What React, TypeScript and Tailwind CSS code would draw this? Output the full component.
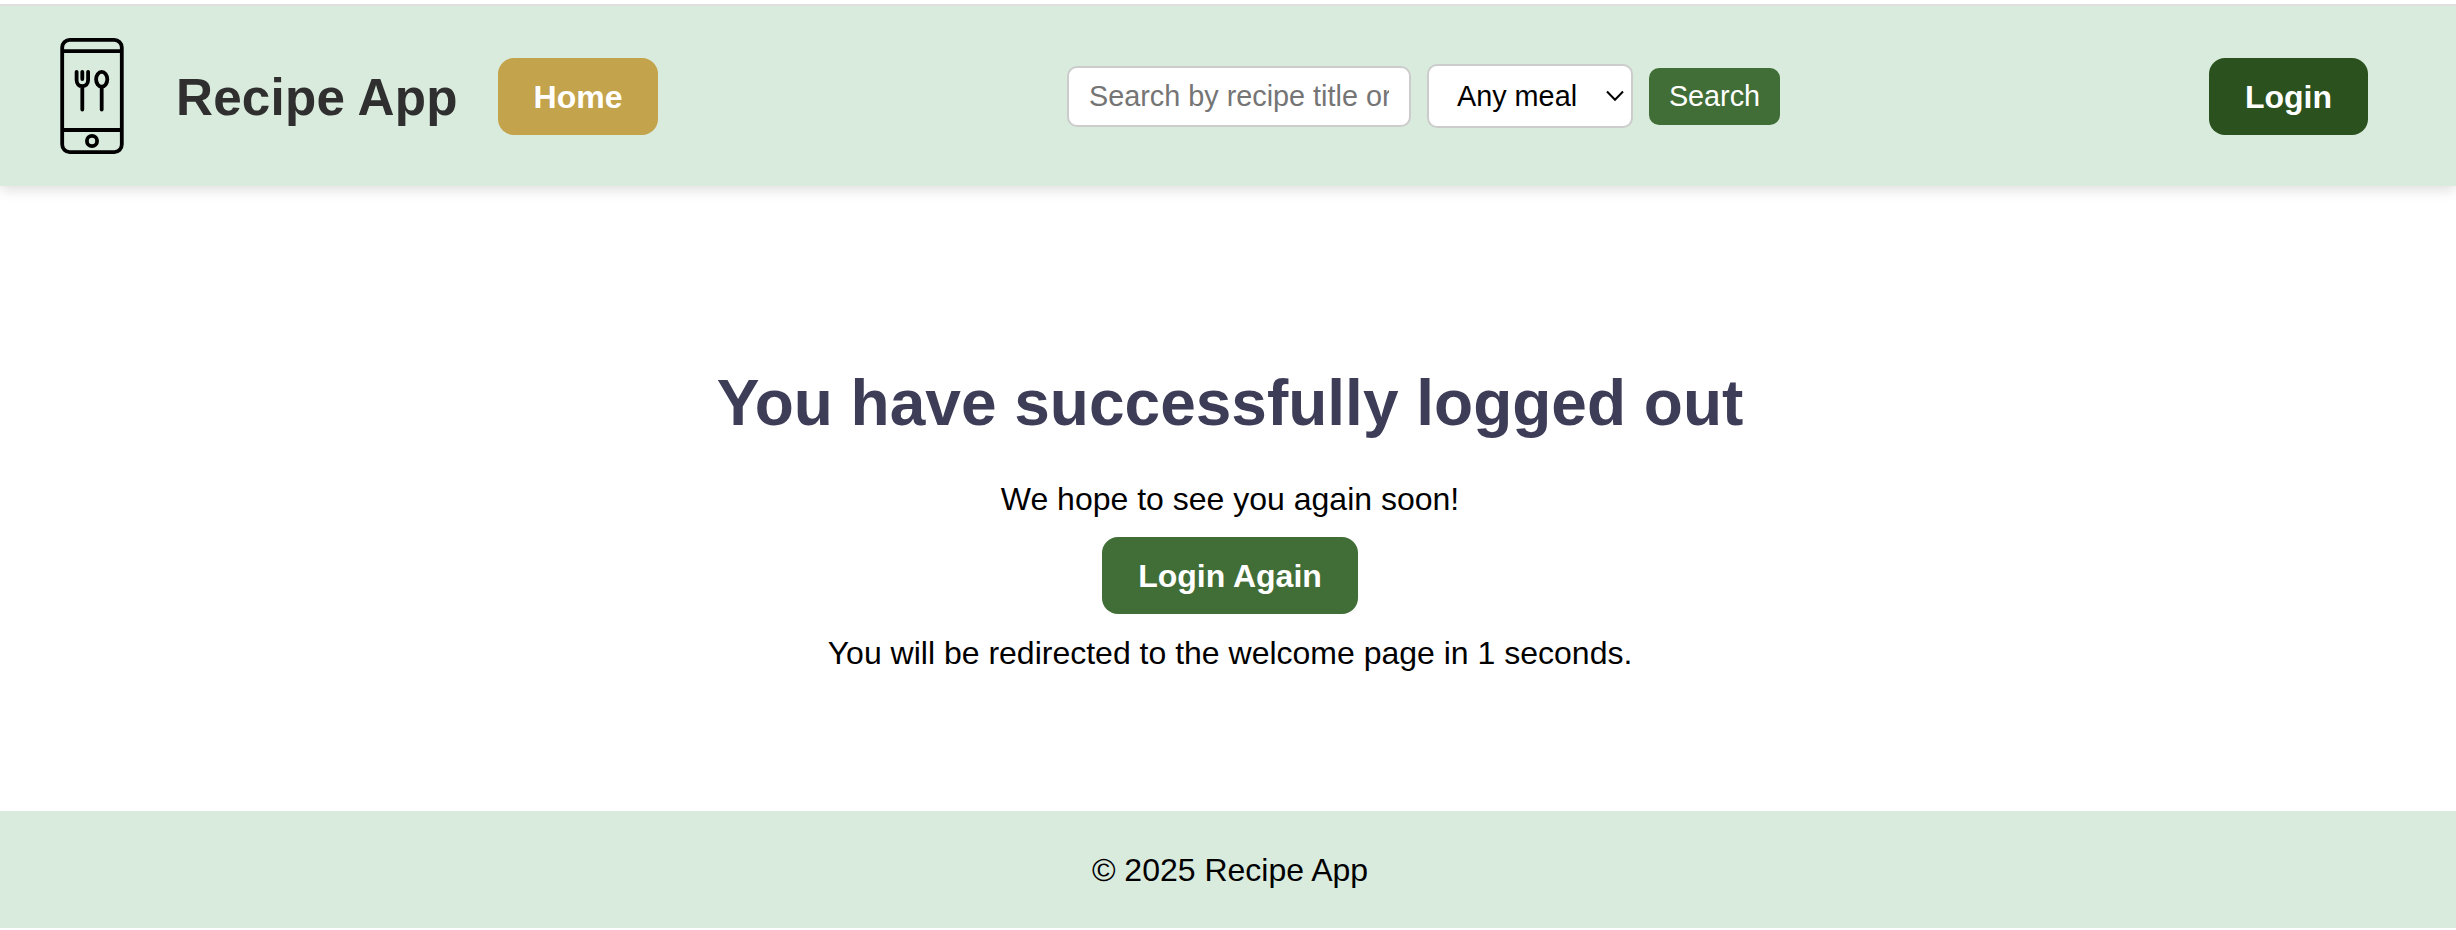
import React from "react";

function PhoneLogo() {
  return (
    <svg
      className="-mt-px block h-[116px] w-16 shrink-0"
      viewBox="60 38 64 116"
      fill="none"
      stroke="#000"
      strokeWidth="3.8"
      strokeLinecap="round"
    >
      <rect x="62.2" y="39.9" width="59.6" height="112.2" rx="7.5" />
      <path d="M63 51.2H121M63 130H121" />
      <circle cx="92" cy="141" r="5.1" />
      <path d="M76.6 71.8V80C76.6 84 79 86.2 82.3 86.2S88.1 84 88.1 80V71.8M82.3 71.8V79M82.3 87V109.6" />
      <ellipse cx="101.7" cy="79.3" rx="5.6" ry="7.4" />
      <path d="M101.7 87V109.6" />
    </svg>
  );
}

function Header() {
  return (
    <header className="flex h-[182px] items-center border-t-2 border-[#e0e0e0] bg-[#d9ebdc] pt-px pr-[88px] pl-[60px] shadow-[0_4px_12px_rgba(0,0,0,0.13)] [clip-path:inset(0_0_-30px_0)]">
      <PhoneLogo />
      <span className="ml-[52px] w-[322px] pt-0.5 text-[51.2px] leading-[60px] font-bold tracking-[0.2px] whitespace-nowrap text-[#2f2f2f]">
        Recipe App
      </span>
      <a className="flex h-[77px] w-40 items-center justify-center rounded-2xl bg-[#c3a34b] text-[32px] font-bold text-white">
        Home
      </a>
      <form className="-mt-px ml-[409px] flex items-center gap-4" onSubmit={(e) => e.preventDefault()}>
        <input
          className="h-[61px] w-[344px] rounded-[10px] border-2 border-[#ccc] bg-white px-5 text-[28.8px] placeholder:text-[#757575]"
          placeholder="Search by recipe title or ingredient"
        />
        <div className="flex h-16 w-[206px] items-center justify-between rounded-[10px] border-2 border-[#ccc] bg-white pr-[7px] pl-7 text-[28.8px] text-black">
          <span className="whitespace-nowrap">Any meal</span>
          <svg className="h-3 w-[18px]" viewBox="0 0 18 12" fill="none" stroke="#000" strokeWidth="2">
            <path d="M1 1.5L9 9.7L17 1.5" />
          </svg>
        </div>
        <button className="h-[57px] w-[131px] rounded-[10px] bg-[#416e36] text-[28.8px] text-white">Search</button>
      </form>
      <a className="ml-auto flex h-[77px] w-[159px] items-center justify-center rounded-2xl bg-[#2a511e] text-[32px] font-bold text-white">
        Login
      </a>
    </header>
  );
}

export default function App() {
  return (
    <div className="flex h-[930px] flex-col overflow-hidden bg-white pt-1 font-['Liberation_Sans',Arial,sans-serif] text-[32px] leading-[38px] text-black">
      <Header />
      <main className="flex h-[625px] flex-col items-center pt-[180px] pl-1">
        <h1 className="text-[64px] leading-[74px] font-bold whitespace-nowrap text-[#3d3d58]">
          You have successfully logged out
        </h1>
        <p className="mt-10">We hope to see you again soon!</p>
        <a className="mt-[19px] flex h-[77px] w-64 items-center justify-center rounded-2xl bg-[#416e36] font-bold text-white">
          Login Again
        </a>
        <p className="mt-5">You will be redirected to the welcome page in 1 seconds.</p>
      </main>
      <footer className="flex h-[117px] items-center justify-center bg-[#d9ebdc] pl-1">
        <p>© 2025 Recipe App</p>
      </footer>
    </div>
  );
}
